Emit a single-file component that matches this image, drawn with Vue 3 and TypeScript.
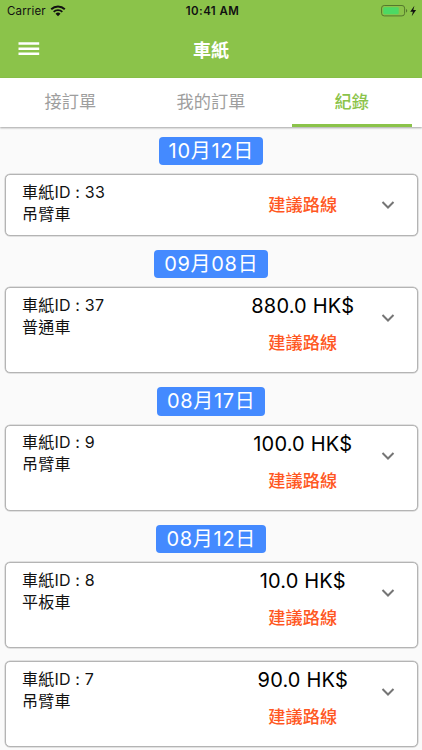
<script setup lang="ts">
import { ref } from 'vue'

interface Order {
  id: number
  vehicle: string
  amount?: string
}

interface OrderGroup {
  date: string
  orders: Order[]
}

const tabs = ['接訂單', '我的訂單', '紀錄']
const activeTab = ref(2)

const groups: OrderGroup[] = [
  { date: '10月12日', orders: [{ id: 33, vehicle: '吊臂車' }] },
  { date: '09月08日', orders: [{ id: 37, vehicle: '普通車', amount: '880.0 HK$' }] },
  { date: '08月17日', orders: [{ id: 9, vehicle: '吊臂車', amount: '100.0 HK$' }] },
  {
    date: '08月12日',
    orders: [
      { id: 8, vehicle: '平板車', amount: '10.0 HK$' },
      { id: 7, vehicle: '吊臂車', amount: '90.0 HK$' },
    ],
  },
]
</script>

<template>
  <div class="screen">
    <header class="header">
      <div class="status">
        <div class="carrier">
          <span>Carrier</span>
          <svg class="wifi" width="16" height="12" viewBox="0 0 16 12">
            <path d="M1.2 4.3a9.7 9.7 0 0 1 13.6 0M3.7 6.9a6.1 6.1 0 0 1 8.6 0" fill="none" stroke="#111" stroke-width="1.9" />
            <path d="M8 11.3 5.5 8.8a3.6 3.6 0 0 1 5 0z" fill="#111" />
          </svg>
        </div>
        <span class="clock">10:41 AM</span>
        <div class="power">
          <svg width="37" height="14" viewBox="0 0 37 14">
            <rect x="0.6" y="1.5" width="23" height="10.4" rx="2.6" fill="none" stroke="#55782d" stroke-width="1" />
            <rect x="2.3" y="3.2" width="15.4" height="7" rx="1" fill="#4cd964" />
            <path d="M25 5v3.6c.8-.3 1.2-1 1.2-1.8S25.8 5.3 25 5z" fill="#55782d" />
            <path d="M33.4 1.700 29.200 7.700h2.700l-1.200 4.600 4.400-6.200h-2.800z" fill="#111" />
          </svg>
        </div>
      </div>
      <div class="app-bar">
        <button class="menu" aria-label="Menu">
          <svg width="22" height="14" viewBox="0 0 22 14">
            <path d="M.5 1.500H21.200M.5 6.700H21.200M.5 11.800H21.200" stroke="#fff" stroke-width="2.400" />
          </svg>
        </button>
        <h1 class="title">車紙</h1>
      </div>
    </header>

    <nav class="tabs">
      <button
        v-for="(tab, i) in tabs"
        :key="tab"
        class="tab"
        :class="{ active: i === activeTab }"
        @click="activeTab = i"
      >
        <span>{{ tab }}</span>
      </button>
    </nav>

    <main class="list">
      <section v-for="group in groups" :key="group.date" class="group">
        <h2 class="date">{{ group.date }}</h2>
        <article v-for="order in group.orders" :key="order.id" class="card" :class="{ compact: !order.amount }">
          <div class="info">
            <div>車紙ID : {{ order.id }}</div>
            <div>{{ order.vehicle }}</div>
          </div>
          <div class="middle">
            <div v-if="order.amount" class="amount">{{ order.amount }}</div>
            <div class="route">建議路線</div>
          </div>
          <svg class="chevron" width="14" height="10" viewBox="0 0 14 10">
            <path d="M1.500 2 7 7.500 12.500 2" fill="none" stroke="#757575" stroke-width="2" />
          </svg>
        </article>
      </section>
    </main>
  </div>
</template>

<style>
body {
  margin: 0;
  background: #fafafa;
}
</style>

<style scoped>
.screen {
  width: 422px;
  height: 750px;
  overflow: hidden;
  display: flex;
  flex-direction: column;
  background: #fafafa;
  color: #111;
  font-family: Inter, 'Noto Sans CJK TC', sans-serif;
}

button {
  border: 0;
  padding: 0;
  background: none;
  font: inherit;
}

.header {
  flex: none;
  height: 78px;
  background: #8bc34a;
}

.status {
  height: 22px;
  padding: 0 4px 0 7px;
  display: grid;
  grid-template-columns: 1fr auto 1fr;
  align-items: center;
  font-size: 11.5px;
  line-height: 22px;
}

.carrier {
  display: flex;
  align-items: center;
  gap: 5px;
  letter-spacing: 0.15px;
}

.carrier .wifi {
  margin-left: -1px;
}

.clock {
  font-weight: 600;
  letter-spacing: 0.4px;
}

.power {
  display: flex;
  justify-content: flex-end;
}

.app-bar {
  height: 56px;
  display: grid;
  grid-template-columns: 1fr auto 1fr;
  align-items: center;
}

.menu {
  width: 22px;
  height: 14px;
  margin: 0 0 2px 18px;
  display: flex;
}

.title {
  margin: 1px 0 0;
  color: #fff;
  font-size: 18px;
  line-height: 26px;
  font-weight: 600;
}

.tabs {
  position: relative;
  flex: none;
  height: 48.5px;
  display: grid;
  grid-template-columns: repeat(3, 1fr);
  background: #fff;
  box-shadow: 0 1px 2px rgba(0, 0, 0, 0.35);
}

.tab {
  margin: 0 10.5px;
  padding-top: 2px;
  border-bottom: 3px solid transparent;
  color: #9e9e9e;
  font-size: 17.2px;
  line-height: 24px;
}

.tab.active {
  color: #8bc34a;
  border-color: #8bc34a;
  font-weight: 500;
}

.list {
  padding: 10.4px 4.5px 0;
  display: flex;
  flex-direction: column;
  gap: 14px;
}

.group {
  display: flex;
  flex-direction: column;
}

.date {
  align-self: center;
  margin: 0 0 9px;
  padding: 0 9.5px 0 10px;
  height: 28.5px;
  border-radius: 4px;
  background: #448aff;
  color: #fff;
  font-size: 20px;
  line-height: 28.5px;
  font-weight: 400;
  letter-spacing: 0.7px;
}

.card {
  box-sizing: border-box;
  height: 86px;
  display: grid;
  grid-template-columns: 206px 1fr 58px;
  border: 1px solid #b4b4b4;
  border-radius: 5px;
  background: #fff;
  box-shadow: 0 0 0 0.5px rgba(0, 0, 0, 0.2);
}

.card + .card {
  margin-top: 12.7px;
}

.card.compact {
  height: 61.5px;
}

.info {
  padding: 5.5px 0 0 16.5px;
  font-size: 16px;
  line-height: 22px;
  letter-spacing: 0.2px;
}

.middle {
  padding-left: 35.5px;
  display: flex;
  flex-direction: column;
  align-items: center;
}

.amount {
  height: 36px;
  font-size: 20px;
  line-height: 36px;
  letter-spacing: 0.18px;
  color: #000;
}

.route {
  margin-top: 6px;
  color: #ff5722;
  font-size: 17.2px;
  line-height: 26px;
  font-weight: 500;
}

.compact .route {
  margin-top: 17px;
}

.chevron {
  margin: 25px 0 0 22px;
}
</style>
